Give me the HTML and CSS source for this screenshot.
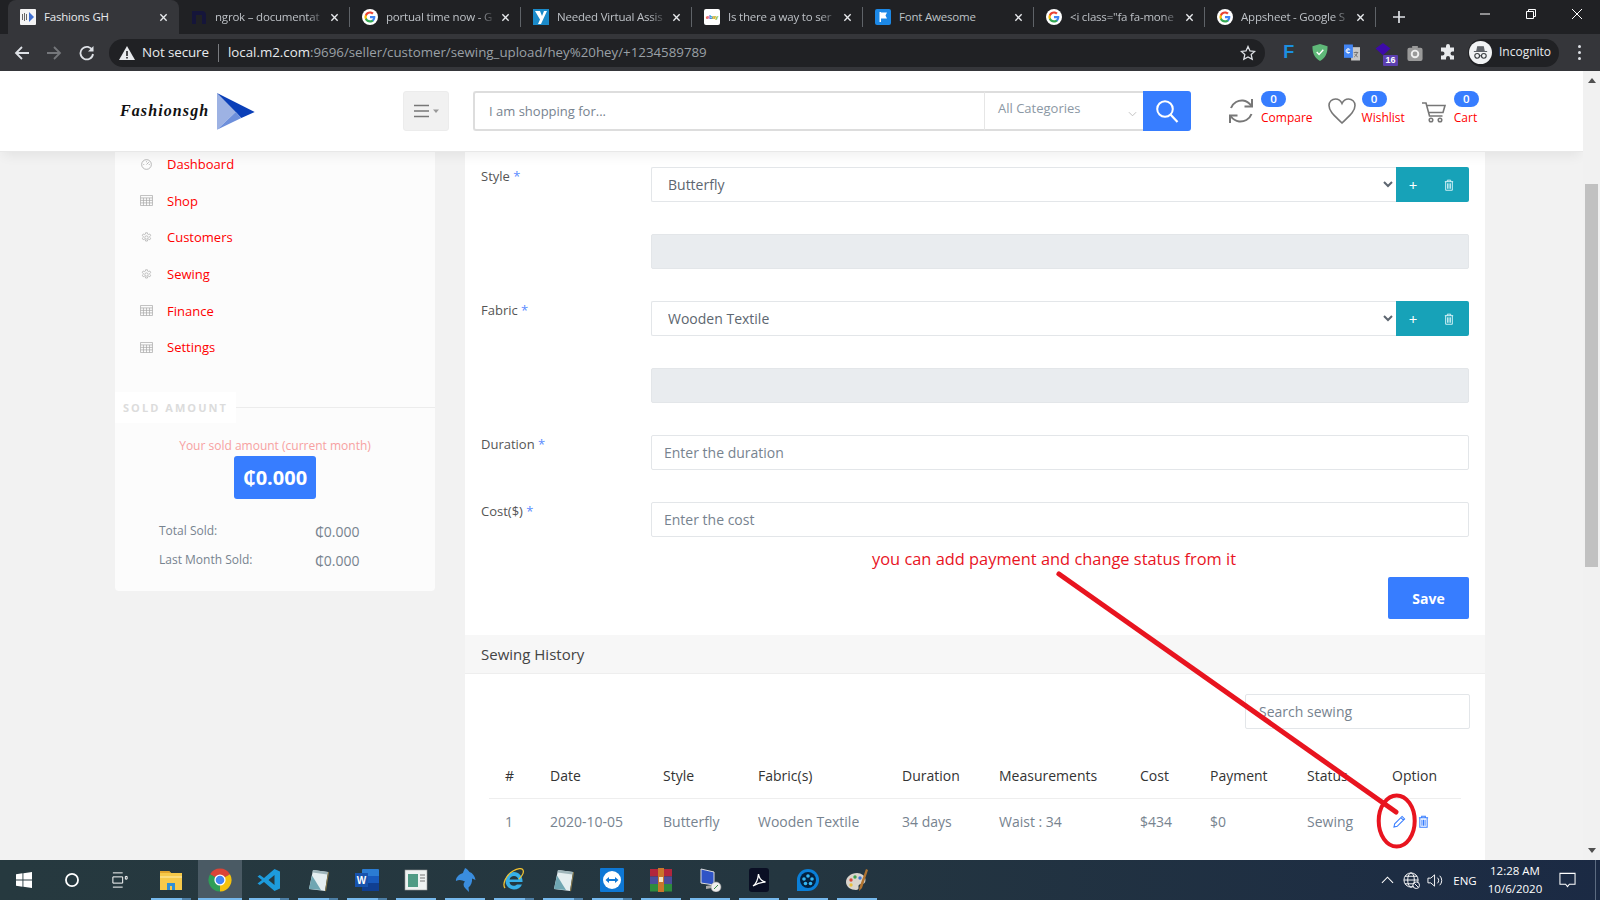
FILE: index.html
```html
<!DOCTYPE html>
<html lang="en">
<head>
<meta charset="utf-8">
<title>Fashions GH</title>
<link rel="stylesheet" href="styles.css">
</head>
<body>
<svg class="defs" aria-hidden="true">
  <symbol id="g" viewBox="0 0 24 24">
    <circle cx="12" cy="12" r="12" fill="#fff"/>
    <g transform="translate(3.2 3.2) scale(.73)">
      <path fill="#4285F4" d="M23 12.3c0-.8-.1-1.600-.2-2.300H12v4.400h6.200c-.3 1.400-1.100 2.600-2.300 3.400v2.900h3.700C21.700 18.700 23 15.800 23 12.300z"/>
      <path fill="#34A853" d="M12 23.500c3.100 0 5.700-1 7.600-2.800l-3.700-2.900c-1 .7-2.300 1.100-3.900 1.100-3 0-5.500-2-6.400-4.700H1.800v3C3.700 21 7.600 23.500 12 23.500z"/>
      <path fill="#FBBC05" d="M5.600 14.200c-.5-1.400-.5-3 0-4.400v-3H1.800a11.500 11.500 0 0 0 0 10.400z"/>
      <path fill="#EA4335" d="M12 5.100c1.700 0 3.200.6 4.400 1.700l3.300-3.300C17.700 1.600 15.100.5 12 .5 7.600.5 3.700 3 1.800 6.800l3.800 3c.9-2.700 3.400-4.700 6.400-4.700z"/>
    </g>
  </symbol>
  <symbol id="x" viewBox="0 0 10 10"><path d="M1.500 1.500l7 7M8.500 1.500l-7 7" fill="none" stroke="currentColor" stroke-width="1.500"/></symbol>
  <symbol id="grid" viewBox="0 0 14 12"><path d="M.5.500h13v11H.5zM.5 3.200h13M.5 5.900h13M.5 8.600h13M3.700 3.200v8.300M7 3.200v8.300M10.300 3.200v8.300" fill="none" stroke="currentColor" stroke-width=".8"/></symbol>
  <symbol id="gear" viewBox="0 0 14 14"><path d="M5.800 1h2.400l.3 1.700 1.200.6 1.500-.8 1.200 1.900-1.300 1.100v1.400l1.300 1.100-1.200 1.900-1.500-.8-1.200.7-.3 1.700H5.800l-.3-1.700-1.200-.7-1.500.8-1.200-1.900 1.300-1.100V5.500L1.600 4.400l1.200-1.900 1.500.8 1.200-.6z" fill="none" stroke="currentColor" stroke-width=".9"/><circle cx="7" cy="7" r="2.100" fill="none" stroke="currentColor" stroke-width=".9"/></symbol>
  <symbol id="trash" viewBox="0 0 12 14"><path d="M1 3h10M4 3V1.200h4V3M2 3v10.300h8V3M4.300 5v6.500M6 5v6.500M7.700 5v6.500" fill="none" stroke="currentColor" stroke-width="1.100"/></symbol>
  <symbol id="notepad" viewBox="0 0 24 24"><path d="M7 2l15 2-3 19-16-2z" fill="#e4eef0"/><path d="M7 2l15 2-.5 2.500L6.500 4.500z" fill="#9fb6bb"/><path d="M3 21L6 7.500l9 14.500z" fill="#6fa6b2"/><path d="M19 23l3-19 1 .3-3 19z" fill="#8a7a4a"/></symbol>
</svg>

<header class="chrome">
  <div class="tabstrip">
    <div class="tab tab-active">
      <svg class="favicon" viewBox="0 0 16 16"><rect width="16" height="16" rx="1" fill="#f4f4f4"/><path d="M2 5h1v6H2zM4 4h1v8H4zM6 5h1v6H6z" fill="#666"/><path d="M9 3l5 5-5 5z" fill="#3f6fd0"/></svg>
      <span class="tab-title">Fashions GH</span>
      <svg class="tab-x"><use href="#x"/></svg>
    </div>
    <div class="tab">
      <svg class="favicon" viewBox="0 0 16 16"><path d="M1 2h10c2.500 0 4 1.500 4 4v9h-4V6H5v9H1z" fill="#15153a"/></svg>
      <span class="tab-title tab-fade">ngrok – documentat</span>
      <svg class="tab-x"><use href="#x"/></svg>
    </div>
    <div class="tab">
      <svg class="favicon"><use href="#g"/></svg>
      <span class="tab-title tab-fade">portual time now - G</span>
      <svg class="tab-x"><use href="#x"/></svg>
    </div>
    <div class="tab">
      <svg class="favicon" viewBox="0 0 16 16"><rect width="16" height="16" fill="#1b8ac9"/><path d="M2 2h5l2 5 2-5h3L8 15H5l2-4.500z" fill="#fff"/></svg>
      <span class="tab-title tab-fade">Needed Virtual Assis</span>
      <svg class="tab-x"><use href="#x"/></svg>
    </div>
    <div class="tab">
      <span class="ebay"><i class="e1">e</i><i class="e2">b</i><i class="e3">a</i><i class="e4">y</i></span>
      <span class="tab-title tab-fade">Is there a way to ser</span>
      <svg class="tab-x"><use href="#x"/></svg>
    </div>
    <div class="tab">
      <svg class="favicon" viewBox="0 0 16 16"><rect width="16" height="16" rx="2" fill="#1c88e6"/><path d="M4.500 3v10h1.500V9.500h6l-1.500-3 1.500-3H6V3z" fill="#fff"/></svg>
      <span class="tab-title">Font Awesome</span>
      <svg class="tab-x"><use href="#x"/></svg>
    </div>
    <div class="tab">
      <svg class="favicon"><use href="#g"/></svg>
      <span class="tab-title tab-fade">&lt;i class="fa fa-mone</span>
      <svg class="tab-x"><use href="#x"/></svg>
    </div>
    <div class="tab">
      <svg class="favicon"><use href="#g"/></svg>
      <span class="tab-title tab-fade">Appsheet - Google S</span>
      <svg class="tab-x"><use href="#x"/></svg>
    </div>
    <svg class="newtab" viewBox="0 0 14 14"><path d="M7 1v12M1 7h12" stroke="#dee1e6" stroke-width="1.700" fill="none"/></svg>
    <div class="winctl">
      <span class="winbtn"><svg viewBox="0 0 12 12"><path d="M1 6h10" stroke="#fff" fill="none"/></svg></span>
      <span class="winbtn"><svg viewBox="0 0 12 12"><path d="M1.500 3.500h7v7h-7zM3.500 3.500v-2h7v7h-2" stroke="#fff" fill="none"/></svg></span>
      <span class="winbtn"><svg viewBox="0 0 12 12"><path d="M1 1l10 10M11 1L1 11" stroke="#fff" fill="none"/></svg></span>
    </div>
  </div>
  <div class="toolbar">
    <span class="navbtn"><svg viewBox="0 0 16 16"><path d="M15 8H2M8 2L2 8l6 6" fill="none" stroke="#dee1e6" stroke-width="1.800"/></svg></span>
    <span class="navbtn"><svg viewBox="0 0 16 16"><path d="M1 8h13M8 2l6 6-6 6" fill="none" stroke="#75777b" stroke-width="1.800"/></svg></span>
    <span class="navbtn"><svg viewBox="0 0 16 16"><path d="M13.500 5.500A6.300 6.300 0 1 0 14 9" fill="none" stroke="#dee1e6" stroke-width="1.800"/><path d="M14.500 1v5.500H9z" fill="#dee1e6"/></svg></span>
    <div class="omnibox">
      <svg class="warn" viewBox="0 0 16 14"><path d="M8 0l8 14H0z" fill="#e8eaed"/><path d="M7.200 5h1.600v5H7.200zM7.200 11h1.600v1.500H7.200z" fill="#202124"/></svg>
      <span class="notsecure">Not secure</span>
      <span class="omni-sep"></span>
      <span class="url"><b>local.m2.com</b>:9696/seller/customer/sewing_upload/hey%20hey/+1234589789</span>
      <svg class="star" viewBox="0 0 16 16"><path d="M8 1.500l2 4.400 4.700.5-3.500 3.200 1 4.700L8 11.900l-4.200 2.400 1-4.700L1.300 6.400 6 5.900z" fill="none" stroke="#dee1e6" stroke-width="1.300"/></svg>
    </div>
    <span class="ext ext-f">F</span>
    <span class="ext"><svg viewBox="0 0 16 18"><path d="M8 0l8 2.500c0 7-2 12.500-8 15.500C2 15 0 9.500 0 2.500z" fill="#5fb878"/><path d="M4.500 8.500l2.500 2.500 4.500-5" fill="none" stroke="#fff" stroke-width="1.500"/></svg></span>
    <span class="ext"><svg viewBox="0 0 18 18"><rect x="8" y="3" width="10" height="15" fill="#c8c8c8"/><rect width="10" height="15" fill="#4285f4"/><path d="M7 6H3.500v3H6.500A2.500 2.500 0 1 1 6 5" fill="none" stroke="#fff" stroke-width="1"/><path d="M11 9h5M13.500 8v1M15 9c-.5 2.500-2 4-3.500 5M12 10.500c.8 1.500 2 2.800 3.500 3.500" fill="none" stroke="#666" stroke-width=".9"/></svg></span>
    <span class="ext ext-badge"><svg viewBox="0 0 16 16"><path d="M8 1l8 6-8 7-8-7z" fill="#3d0aa8"/></svg><span class="ext-count">16</span></span>
    <span class="ext"><svg viewBox="0 0 16 18"><path d="M5 2h6v2h3a2 2 0 0 1 2 2v10a2 2 0 0 1-2 2H2a2 2 0 0 1-2-2V6a2 2 0 0 1 2-2h3z" fill="#9a9a9a"/><circle cx="8" cy="10.500" r="3.500" fill="none" stroke="#eee" stroke-width="2"/></svg></span>
    <span class="ext ext-puzzle"><svg viewBox="0 0 16 16"><path d="M6 1.500a2 2 0 0 1 4 0V3h4v4h-1.500a2 2 0 0 0 0 4H14v4H10v-1.500a2 2 0 0 0-4 0V15H1v-4h1.500a2 2 0 0 0 0-4H1V3h5z" fill="#e8eaed"/></svg></span>
    <div class="incognito">
      <span class="inc-avatar"><svg viewBox="0 0 20 20"><path d="M3 9h14M6 9l1-5h6l1 5" fill="#5f6368" stroke="#5f6368" stroke-width="1.200"/><circle cx="6.500" cy="13.500" r="2.500" fill="none" stroke="#3c4043" stroke-width="1.200"/><circle cx="13.500" cy="13.500" r="2.500" fill="none" stroke="#3c4043" stroke-width="1.200"/><path d="M9 13.500h2" stroke="#3c4043"/></svg></span>
      <span class="inc-label">Incognito</span>
    </div>
    <span class="kebab"><i></i><i></i><i></i></span>
  </div>
</header>

<div class="viewport">
  <div class="page">
    <div class="site-header">
      <a class="logo">
        <span class="logo-text">Fashionsgh</span>
        <svg class="logo-mark" viewBox="0 0 38 37"><path d="M0 0v36.700L18.700 19z" fill="#9db2e3"/><path d="M0 0l37.700 19-13.400 6-5.600-6z" fill="#0a3fb8"/><path d="M0 36.700L18.700 19l5.600 6z" fill="#6d8fdb"/></svg>
      </a>
      <button class="burger">
        <svg viewBox="0 0 26 14"><path d="M1 1.500h15M1 7h15M1 12.500h15" stroke="#777" stroke-width="1.400" fill="none"/><path d="M20 5.500h6l-3 3.500z" fill="#999"/></svg>
      </button>
      <form class="search">
        <input class="search-input" placeholder="I am shopping for...">
        <div class="search-cat"><span>All Categories</span>
          <svg viewBox="0 0 10 6"><path d="M1 1l4 4 4-4" fill="none" stroke="#bbb"/></svg>
        </div>
        <button class="search-btn" type="button"><svg viewBox="0 0 24 24"><circle cx="10" cy="10" r="7.800" fill="none" stroke="#fff" stroke-width="2"/><path d="M15.500 15.500l7 7.500" stroke="#fff" stroke-width="2.200"/></svg></button>
      </form>
      <div class="actions">
        <a class="action">
          <svg class="act-icon" viewBox="0 0 30 30"><path d="M5 12C7 6.500 12.500 4 17 4.500c3.500.4 6 2.200 8.500 5.500M25.500 18C23.500 23.500 18 26 13 25.500c-3.500-.4-6-2.200-8.500-5.500" fill="none" stroke="#777" stroke-width="2"/><path d="M26 3v7.500h-7.500M4 27v-7.500h7.500" fill="none" stroke="#777" stroke-width="2"/></svg>
          <span class="act-col"><b class="badge">0</b><span class="act-label">Compare</span></span>
        </a>
        <a class="action">
          <svg class="act-icon" viewBox="0 0 30 30"><path d="M15 27C9 21 2 16 2 9.500 2 5.500 5 3 8.500 3c3 0 5.200 1.700 6.500 4.500C16.300 4.700 18.500 3 21.500 3 25 3 28 5.500 28 9.500 28 16 21 21 15 27z" fill="none" stroke="#777" stroke-width="1.600"/></svg>
          <span class="act-col"><b class="badge">0</b><span class="act-label">Wishlist</span></span>
        </a>
        <a class="action">
          <svg class="act-icon" viewBox="0 0 30 30"><path d="M3 7h4l3.500 13h13M8 9.500h18l-2 7H9.500" fill="none" stroke="#777" stroke-width="1.600"/><circle cx="12" cy="24" r="1.800" fill="none" stroke="#777" stroke-width="1.500"/><circle cx="21" cy="24" r="1.800" fill="none" stroke="#777" stroke-width="1.500"/></svg>
          <span class="act-col"><b class="badge">0</b><span class="act-label">Cart</span></span>
        </a>
      </div>
    </div>

    <div class="main">
      <aside class="sidebar">
        <ul class="menu">
          <li><svg viewBox="0 0 14 12"><circle cx="7" cy="6" r="5.300" fill="none" stroke="currentColor" stroke-width=".9"/><path d="M7 6l2.500-2.500M3.500 6h1M7 2.500v1M10.500 6h-1" stroke="currentColor" stroke-width=".9"/></svg><a>Dashboard</a></li>
          <li><svg><use href="#grid"/></svg><a>Shop</a></li>
          <li><svg><use href="#gear"/></svg><a>Customers</a></li>
          <li><svg><use href="#gear"/></svg><a>Sewing</a></li>
          <li><svg><use href="#grid"/></svg><a>Finance</a></li>
          <li><svg><use href="#grid"/></svg><a>Settings</a></li>
        </ul>
        <div class="sold-head"><span>SOLD AMOUNT</span><i></i></div>
        <p class="sold-note">Your sold amount (current month)</p>
        <div class="sold-value"><span class="cedi">₵</span>0.000</div>
        <dl class="sold-stats">
          <dt>Total Sold:</dt><dd><span class="cedi">₵</span>0.000</dd>
          <dt>Last Month Sold:</dt><dd><span class="cedi">₵</span>0.000</dd>
        </dl>
      </aside>

      <section class="panel">
        <form class="upload">
          <div class="form-grid">
            <label class="f-label">Style <em>*</em></label>
            <div class="select-group">
              <select><option>Butterfly</option></select>
              <div class="sg-btns"><span class="sg-plus">+</span><svg><use href="#trash"/></svg></div>
            </div>
            <span></span>
            <input class="f-input" disabled>
            <label class="f-label">Fabric <em>*</em></label>
            <div class="select-group">
              <select><option>Wooden Textile</option></select>
              <div class="sg-btns"><span class="sg-plus">+</span><svg><use href="#trash"/></svg></div>
            </div>
            <span></span>
            <input class="f-input" disabled>
            <label class="f-label">Duration <em>*</em></label>
            <input class="f-input" placeholder="Enter the duration">
            <label class="f-label">Cost($) <em>*</em></label>
            <input class="f-input" placeholder="Enter the cost">
          </div>
          <div class="save-row"><button class="save" type="button">Save</button></div>
        </form>
        <h2 class="section-head">Sewing History</h2>
        <div class="history">
          <div class="history-tools"><input class="f-input history-search" placeholder="Search sewing"></div>
          <table class="history-table">
            <colgroup>
              <col class="c1"><col class="c2"><col class="c3"><col class="c4"><col class="c5"><col class="c6"><col class="c7"><col class="c8"><col class="c9"><col class="c10">
            </colgroup>
            <thead>
              <tr><th>#</th><th>Date</th><th>Style</th><th>Fabric(s)</th><th>Duration</th><th>Measurements</th><th>Cost</th><th>Payment</th><th>Status</th><th>Option</th></tr>
            </thead>
            <tbody>
              <tr><td>1</td><td>2020-10-05</td><td>Butterfly</td><td>Wooden Textile</td><td>34 days</td><td>Waist : 34</td><td>$434</td><td>$0</td><td>Sewing</td>
                <td><span class="row-ops">
                  <svg class="op-edit" viewBox="0 0 14 14"><path d="M1 13l.8-3.500L9.800 1.500l2.700 2.700-8 8zM8.500 2.800l2.700 2.700" fill="none" stroke="#377dff" stroke-width="1.100"/></svg>
                  <svg class="op-trash"><use href="#trash"/></svg>
                </span></td></tr>
            </tbody>
          </table>
        </div>
      </section>
    </div>
  </div>
  <div class="scrollbar">
    <span class="sb-arrow sb-up"></span>
    <span class="sb-thumb"></span>
    <span class="sb-arrow sb-down"></span>
  </div>
</div>

<footer class="taskbar">
  <span class="tb-sys"><svg viewBox="0 0 18 18"><path d="M0 2.500L7.300 1.500v7H0zM8.300 1.300L18 0v8.500H8.300zM0 9.500h7.300v7L0 15.500zM8.300 9.500H18V18l-9.700-1.300z" fill="#fff"/></svg></span>
  <span class="tb-sys"><svg viewBox="0 0 18 18"><circle cx="9" cy="9" r="6.800" fill="none" stroke="#fff" stroke-width="2"/></svg></span>
  <span class="tb-sys"><svg viewBox="0 0 18 18"><path d="M1 1h11M1 17h11M1 5.500h11v7H1zM15 5h2v3h-2z" fill="none" stroke="#fff" stroke-width="1.100"/></svg></span>
  <div class="tb-apps">
    <span class="tb-app tb-split"><svg viewBox="0 0 24 24"><path d="M1 3h9l2 2h11v17H1z" fill="#f6c94a"/><path d="M1 3h9l2 2H1z" fill="#e2a52c"/><path d="M1 8h22v2H1z" fill="#fbdc7c"/><path d="M8 22v-7h8v7h-3v-4h-2v4z" fill="#2f8fd6"/></svg></span>
    <span class="tb-app tb-active"><svg viewBox="0 0 24 24"><path d="M12 12L2.040 6.250A11.500 11.500 0 0 1 21.960 6.250z" fill="#db4437"/><path d="M12 12L21.960 6.250A11.500 11.500 0 0 1 12 23.500z" fill="#f4c20d"/><path d="M12 12L12 23.500A11.500 11.500 0 0 1 2.040 6.250z" fill="#2f9e57"/><circle cx="12" cy="12" r="5.600" fill="#fff"/><circle cx="12" cy="12" r="4.300" fill="#4285f4"/></svg></span>
    <span class="tb-app tb-split"><svg viewBox="0 0 24 24"><path fill-rule="evenodd" d="M17.500 1L23 3.500v17L17.500 23 7 14l-4.200 3L.5 15.500 5 12 .5 8.500 2.800 7 7 10zM17.500 7l-6 5 6 5z" fill="#1d9bdc"/></svg></span>
    <span class="tb-app tb-split"><svg><use href="#notepad"/></svg></span>
    <span class="tb-app tb-split"><svg viewBox="0 0 24 24"><rect x="7" y="1" width="17" height="22" rx="1" fill="#2b7cd3"/><path d="M7 8h17v7H7z" fill="#185abd"/><path d="M7 15h17v8H7z" fill="#103f91"/><rect y="5" width="13" height="14" fill="#1853ad"/><text class="word-w" x="6.500" y="16">W</text></svg></span>
    <span class="tb-app"><svg viewBox="0 0 24 24"><rect x="1" y="2" width="22" height="20" fill="#eef2f2" stroke="#999" stroke-width=".6"/><rect x="4" y="6" width="10" height="13" fill="#4f9b85"/><path d="M16 7h5M16 10h5M16 13h5" stroke="#777"/></svg></span>
    <span class="tb-app"><svg viewBox="0 0 24 24"><path d="M12 0c2 1 3.500 2.500 4.500 4 3 1 5.500 4 6 8l-3.500-1.500c.5 3.500-1 7-3.500 9L16 24l-3.500-3.500C10 18 10 15.500 12 13.500 9 12 6 11.500 3 13 2.500 10.500 5 6.500 10 5c.5-2 1.500-3.500 2-5z" fill="#3a8dde"/></svg></span>
    <span class="tb-app tb-split"><svg viewBox="0 0 24 24"><path d="M12 4a8.500 8.500 0 0 0-8.500 9c0 5 4 8.500 8.500 8.500 3.500 0 6.500-1.800 8-5h-5c-1 1-2 1.300-3.300 1.300-2.300 0-4-1.500-4.200-3.800h13c.5-5.500-3.500-10-8.500-10zM7.500 11.500C8 9.500 9.700 8 12 8s3.900 1.500 4.300 3.500z" fill="#37b0e8"/><path d="M3 20C0 16 4 7 11 3c5-3 9-3 10-1s-1 6-4 9" fill="none" stroke="#f2c230" stroke-width="1.300"/></svg></span>
    <span class="tb-app tb-split"><svg><use href="#notepad"/></svg></span>
    <span class="tb-app tb-split"><svg viewBox="0 0 24 24"><rect width="24" height="24" rx="1" fill="#0e78d5"/><circle cx="12" cy="12" r="9" fill="#fff"/><path d="M5.500 12l3.500-3v2h6V9l3.500 3-3.500 3v-2H9v2z" fill="#0e78d5"/></svg></span>
    <span class="tb-app"><svg viewBox="0 0 24 24"><rect x="1" y="1" width="22" height="7.500" fill="#b2263c"/><rect x="1" y="8.500" width="22" height="7.500" fill="#4b4d9a"/><rect x="1" y="16" width="22" height="7.500" fill="#2e8b3e"/><rect x="9" y="0" width="6" height="24" fill="#c9762a"/><rect x="10" y="9" width="4" height="5" fill="#f3e7c4"/></svg></span>
    <span class="tb-app"><svg viewBox="0 0 24 24"><path d="M3 1l13 3v13L3 15z" fill="#2f54c6" stroke="#ddd"/><path d="M8 18l6-1v3l-6 1z" fill="#aaa"/><circle cx="18" cy="19" r="5" fill="#eee" stroke="#999" stroke-width=".6"/><path d="M16 21l4-4" stroke="#3a8a44"/></svg></span>
    <span class="tb-app"><svg viewBox="0 0 24 24"><rect x="2" width="20" height="24" rx="3" fill="#0a0f24"/><path d="M6 18c3-2 5-7 5.500-12 .5 5 3 7 7 8-4 0-8 1-12.500 4z" fill="none" stroke="#fff" stroke-width="1.300"/></svg></span>
    <span class="tb-app"><svg viewBox="0 0 24 24"><path d="M12 1a11 11 0 1 1 0 22H1v-11A11 11 0 0 1 12 1z" fill="#0a7fd8"/><circle cx="12" cy="12" r="8" fill="#04213f"/><g fill="#35b6f2"><circle cx="12" cy="8" r="1.800"/><circle cx="8" cy="11" r="1.800"/><circle cx="16" cy="11" r="1.800"/><circle cx="9.500" cy="15.500" r="1.800"/><circle cx="14.500" cy="15.500" r="1.800"/></g></svg></span>
    <span class="tb-app"><svg viewBox="0 0 24 24"><path d="M12 5C6 5 1 9 1 14c0 5 5 8 10 8 2 0 3-1 2.500-3s1-3 3-3 4-1 4-4c0-4-4-7-8.500-7z" fill="#d9d4cc"/><circle cx="6" cy="12" r="1.700" fill="#d94a3a"/><circle cx="10" cy="9" r="1.700" fill="#3fa04b"/><circle cx="15" cy="10" r="1.700" fill="#3f76d0"/><circle cx="6" cy="17" r="1.700" fill="#e8c13c"/><path d="M21 1l2 1-6 18-3 3 .5-4z" fill="#b0732f"/></svg></span>
  </div>
  <div class="tray">
    <svg class="tray-chev" viewBox="0 0 14 8"><path d="M1 7l6-6 6 6" fill="none" stroke="#fff" stroke-width="1.100"/></svg>
    <svg class="tray-ic tray-globe" viewBox="0 0 18 18"><circle cx="8.500" cy="8.500" r="7.500" fill="none" stroke="#fff"/><ellipse cx="8.500" cy="8.500" rx="3.500" ry="7.500" fill="none" stroke="#fff"/><path d="M1 8.500h15M2 4.500h13M2 12.500h13" stroke="#fff" fill="none"/><circle cx="14" cy="14" r="3.500" fill="#1b2a44" stroke="#fff"/><path d="M12 12l4 4" stroke="#fff"/></svg>
    <svg class="tray-ic tray-vol" viewBox="0 0 18 18"><path d="M1 6.500h3L8 3v12l-4-3.500H1z" fill="none" stroke="#fff"/><path d="M11 6a4 4 0 0 1 0 6M13.500 4a7 7 0 0 1 0 10" fill="none" stroke="#fff"/></svg>
    <span class="tray-lang">ENG</span>
    <span class="tray-clock"><span>12:28 AM</span><span>10/6/2020</span></span>
    <svg class="tray-note" viewBox="0 0 18 16"><path d="M1 1h16v11.500h-6l-2 2.500-2-2.500H1z" fill="none" stroke="#fff" stroke-width="1.100"/></svg>
    <span class="tray-peek"></span>
  </div>
</footer>
<div class="under-strip"></div>

<svg class="annotation" viewBox="0 0 1600 908">
  <text class="anno-text" x="872" y="565">you can add payment and change status from it</text>
  <path d="M1059 574L1396 812" fill="none" stroke="#e8141f" stroke-width="5" stroke-linecap="round"/>
  <ellipse cx="1396.700" cy="821" rx="18" ry="25.500" fill="none" stroke="#e8141f" stroke-width="4"/>
</svg>
</body>
</html>
```
FILE: styles.css
```css
* { box-sizing: border-box; }
html, body { margin: 0; padding: 0; }
body {
  position: relative;
  width: 1600px;
  height: 908px;
  overflow: hidden;
  display: flex;
  flex-direction: column;
  background: #fff;
  font-family: "Open Sans", "DejaVu Sans", sans-serif;
  font-size: 14px;
  color: #77838f;
}
.defs { display: none; }
.cedi { font-family: "Noto Sans", "DejaVu Sans", sans-serif; }

/* browser chrome */
.chrome { flex: none; height: 71px; background: #35363a; color: #e8eaed; }
.tabstrip { height: 34px; background: #202124; display: flex; align-items: stretch; padding-left: 8px; }
.tab {
  flex: none;
  width: 171px;
  display: flex;
  align-items: center;
  padding: 0 5px 0 12px;
  gap: 8px;
  color: #bdc1c6;
  background: linear-gradient(#5f6368, #5f6368) right center / 1px 20px no-repeat;
}
.tab-active { background: #35363a; border-radius: 8px 8px 0 0; color: #e8eaed; }
.favicon { width: 16px; height: 16px; flex: none; }
.ebay {
  width: 16px; height: 16px; flex: none; background: #fff; border-radius: 2px;
  font: bold 6px/16px "Liberation Sans", sans-serif; text-align: center; letter-spacing: -.4px;
}
.ebay i { font-style: normal; }
.e1 { color: #e53238; } .e2 { color: #0064d2; } .e3 { color: #d69e00; } .e4 { color: #86b817; }
.tab-title {
  flex: 1; min-width: 0; white-space: nowrap; margin-top: -2px;
  font-size: 11.500px; letter-spacing: -.2px;
}
.tab-fade {
  -webkit-mask-image: linear-gradient(90deg, #000 84%, transparent 100%);
  mask-image: linear-gradient(90deg, #000 84%, transparent 100%);
}
.tab-x { width: 9px; height: 9px; flex: none; margin-left: -3px; margin-right: 6px; color: #e8eaed; }
.newtab { width: 14px; height: 14px; align-self: center; margin-left: 16px; flex: none; }
.winctl { margin-left: auto; display: flex; }
.winbtn { width: 46px; display: flex; align-items: center; justify-content: center; padding-bottom: 6px; }
.winbtn svg { width: 12px; height: 12px; }

.toolbar { height: 37px; display: flex; align-items: center; padding-left: 6px; }
.navbtn { width: 32px; height: 32px; display: flex; align-items: center; justify-content: center; flex: none; }
.navbtn svg { width: 16px; height: 16px; }
.navbtn:nth-child(3) { margin-left: 1px; margin-right: 6px; }
.omnibox {
  flex: none; width: 1156px; height: 28px; border-radius: 14px; background: #202124;
  display: flex; align-items: center; padding: 0 9px 0 10px;
}
.warn { width: 16px; height: 14px; flex: none; }
.notsecure { margin: -2px 0 0 7px; font-size: 13.400px; color: #e8eaed; white-space: nowrap; letter-spacing: -.1px; }
.omni-sep { width: 1px; height: 18px; background: #7a7c80; margin: 0 9px; flex: none; }
.url { flex: 1; margin-top: -2px; font-size: 13.300px; color: #9aa0a6; white-space: nowrap; }
.url b { font-weight: 400; color: #e8eaed; }
.star { width: 16px; height: 16px; flex: none; }
.ext { width: 31.500px; height: 17px; flex: none; display: flex; align-items: center; justify-content: center; position: relative; }
.ext svg { width: 16px; height: 17px; }
.omnibox + .ext { margin-left: 8px; }
.ext-f { color: #1b8fe0; font: bold 18px/17px "Liberation Sans", sans-serif; }
.ext-badge svg { height: 15px; margin-top: -6px; }
.ext-count {
  position: absolute; left: 15.500px; top: 11px; width: 15px; height: 11px;
  background: #5b3fb0; color: #fff; font: bold 9px/11px "Liberation Sans", sans-serif; text-align: center; border-radius: 1px;
}
.ext-puzzle { margin-left: 1.500px; margin-right: -1.500px; }
.incognito {
  flex: none; width: 91px; height: 28px; margin-left: 6px; border-radius: 14px; background: #202124;
  display: flex; align-items: center; gap: 7px; padding-left: 1px; color: #e8eaed; font-size: 12px;
}
.inc-label { margin-top: -2px; }
.inc-avatar { width: 23px; height: 23px; border-radius: 50%; background: #f1f3f4; display: flex; align-items: center; justify-content: center; }
.inc-avatar svg { width: 19px; height: 19px; }
.kebab { width: 41px; display: flex; flex-direction: column; align-items: center; gap: 3px; }
.kebab i { width: 3px; height: 3px; border-radius: 50%; background: #dee1e6; }

/* viewport */
.viewport { flex: none; height: 789px; display: flex; }
.page { width: 1583px; flex: none; background: #f2f2f2; overflow: hidden; }
.scrollbar { width: 17px; flex: none; background: #f1f1f1; display: flex; flex-direction: column; align-items: center; }
.sb-arrow { width: 0; height: 0; border-left: 4px solid transparent; border-right: 4px solid transparent; }
.sb-up { border-bottom: 5px solid #505050; margin-top: 7px; }
.sb-down { border-top: 5px solid #505050; margin-top: auto; margin-bottom: 7px; }
.sb-thumb { width: 13px; height: 383px; background: #c1c1c1; margin-top: 101px; }

/* site header */
.site-header {
  position: relative; z-index: 2;
  height: 80px; background: #fff; display: flex; align-items: center; padding-left: 120px;
  box-shadow: 0 1px 0 #e8e8e8, 0 7px 12px -3px rgba(0, 0, 0, .07);
}
.logo { flex: none; width: 283px; display: flex; align-items: center; gap: 8px; }
.logo-text { font: italic bold 16px "Liberation Serif", serif; color: #111; letter-spacing: 1.100px; width: 89px; white-space: nowrap; }
.logo-mark { width: 38px; height: 37px; }
.burger {
  flex: none; width: 46px; height: 40px; padding: 0; border: 1px solid #ececec; border-radius: 3px; background: #f1f1f1;
  display: flex; align-items: center; justify-content: center; margin-right: 24px;
}
.burger svg { width: 26px; height: 14px; }
.search { flex: none; width: 718px; height: 40px; display: flex; margin: 0; }
.search-input {
  width: 511px; height: 40px; border: 2px solid #ddd; border-right: 0; border-radius: 3px 0 0 3px;
  padding: 0 14px; font: 13px "Open Sans", sans-serif; outline: 0; color: #77838f;
}
.search-input::placeholder, .f-input::placeholder { color: #77838f; opacity: 1; }
.search-cat {
  width: 159px; height: 40px; border: 2px solid #ddd; border-left: 1px solid #e6e6e6; border-right: 0;
  display: flex; align-items: flex-start; justify-content: space-between; padding: 6px 6px 0 13px;
  font-size: 13px; color: #8c98a4;
}
.search-cat svg { width: 9px; height: 6px; margin-top: 12px; }
.search-btn { width: 48px; height: 40px; padding: 0; border: 0; background: #377dff; border-radius: 0 3px 3px 0; display: flex; align-items: center; justify-content: center; }
.search-btn svg { width: 24px; height: 24px; }
.actions { display: flex; gap: 14px; margin-left: 35px; }
.action { display: flex; align-items: center; gap: 5px; }
.act-icon { width: 30px; height: 30px; flex: none; }
.act-col { display: flex; flex-direction: column; align-items: flex-start; height: 40px; }
.badge {
  width: 25px; height: 16px; border-radius: 8px; background: #377dff; color: #fff;
  font-size: 11.500px; line-height: 16px; font-weight: 600; text-align: center;
}
.act-label { font-size: 12px; line-height: 22px; color: #f00; white-space: nowrap; }

/* layout */
.main { display: flex; align-items: flex-start; padding-left: 115px; gap: 30px; }
.sidebar { width: 320px; flex: none; background: #fcfcfc; border-radius: 0 0 4px 4px; padding-bottom: 16px; }
.menu { list-style: none; margin: -5.350px 0 0; padding: 0; }
.menu li { height: 36.700px; display: flex; align-items: center; padding-left: 25px; }
.menu svg { width: 13px; height: 11px; color: #aaa; flex: none; margin-right: 14px; }
.menu a { font-size: 13px; color: #f00; }
.sold-head { display: flex; align-items: center; height: 31px; margin-top: 26px; }
.sold-head span {
  width: 121px; height: 31px; line-height: 31px; padding-left: 8px; background: #fff;
  font-size: 11px; font-weight: 700; letter-spacing: 2.050px; color: #dcdcdc; white-space: nowrap;
}
.sold-head i { flex: 1; height: 1px; background: #ececec; }
.sold-note { margin: 13px 0 0; text-align: center; font-size: 12px; line-height: 20px; color: #f7a1a1; }
.sold-value {
  width: 82px; height: 43px; margin: 0 auto; border-radius: 3px; background: #377dff; color: #fff;
  font-size: 20px; font-weight: 700; line-height: 43px; text-align: center; white-space: nowrap;
}
.sold-stats { display: grid; grid-template-columns: 156px 1fr; grid-auto-rows: 29px; margin: 18px 0 0; padding-left: 44px; align-items: center; }
.sold-stats dt { font-size: 12px; color: #77838f; margin-top: -2px; }
.sold-stats dd { margin: 0; font-size: 14px; color: #77838f; }

/* panel */
.panel { width: 1020px; flex: none; background: #fff; }
.upload { padding: 16px 16px 16px; }
.form-grid { display: grid; grid-template-columns: 170px 818px; row-gap: 32px; }
.f-label { font-size: 13px; line-height: 19px; color: #555; }
.f-label em { font-style: normal; color: #5b8cff; }
.f-input {
  height: 35px; width: 100%; border: 1px solid #e3e6e9; border-radius: 2px; padding: 0 12px; background: #fff;
  font: 14px "Open Sans", sans-serif; color: #77838f; outline: 0;
}
.f-input:disabled { background: #e9ecef; }
.select-group { display: flex; height: 35px; }
.select-group select {
  flex: 1; min-width: 0; height: 35px; border: 1px solid #e3e6e9; border-right: 0; border-radius: 2px 0 0 2px; background: #fff;
  padding: 0 0 0 12px; font: 14px "Open Sans", sans-serif; color: #5d6670; outline: 0;
}
.sg-btns { flex: none; width: 73px; background: #17a2b8; border-radius: 0 2px 2px 0; display: flex; align-items: center; color: #fff; padding-left: 12px; gap: 26px; }
.sg-plus { font-size: 15px; width: 10px; text-align: center; }
.sg-btns svg { width: 10px; height: 12px; color: #dff6fa; }
.save-row { display: flex; justify-content: flex-end; margin-top: 40px; }
.save { width: 81px; height: 42px; padding: 0; border: 0; border-radius: 2px; background: #377dff; color: #fff; font: 700 14px "Open Sans", sans-serif; }
.section-head {
  margin: 0; height: 39px; padding: 0 16px; background: #f7f7f7; border-bottom: 1px solid #eee;
  font-size: 15px; font-weight: 400; line-height: 39px; color: #444;
}
.history { padding: 20px 15px 40px 24px; }
.history-tools { display: flex; justify-content: flex-end; }
.history-search { width: 225px; padding-left: 13px; }
.history-table { table-layout: fixed; width: 972px; border-collapse: collapse; margin-top: 25px; }
.c1 { width: 41px; } .c2 { width: 113px; } .c3 { width: 95px; } .c4 { width: 144px; } .c5 { width: 97px; }
.c6 { width: 141px; } .c7 { width: 70px; } .c8 { width: 97px; } .c9 { width: 85px; } .c10 { width: 89px; }
.history-table th { height: 44px; padding: 0 0 0 20px; text-align: left; font-size: 14px; font-weight: 400; color: #333; border-bottom: 1px solid #eee; white-space: nowrap; }
.history-table td { height: 48px; padding: 0 0 2px 20px; font-size: 14px; color: #77838f; white-space: nowrap; }
.history-table th:first-child, .history-table td:first-child { padding-left: 16px; }
.row-ops { display: flex; align-items: center; gap: 12px; padding-left: 1px; }
.op-edit { width: 13px; height: 13px; }
.op-trash { width: 11px; height: 13px; color: #377dff; }

/* taskbar */
.taskbar {
  flex: none; height: 40px; display: flex; align-items: stretch;
  background: linear-gradient(90deg, #26393f 0%, #243640 50%, #1b2a44 100%);
}
.tb-sys { width: 48px; display: flex; align-items: center; justify-content: center; }
.tb-sys svg { width: 16px; height: 18px; }
.tb-apps { display: flex; margin-left: 2px; }
.tb-app {
  width: 49px; display: flex;
  background: linear-gradient(#76b9ed, #76b9ed) center bottom / 40px 2px no-repeat;
}
.tb-app svg { width: 24px; height: 24px; margin: auto; }
.tb-split {
  background:
    linear-gradient(#76b9ed, #76b9ed) 4.500px bottom / 31px 2px no-repeat,
    linear-gradient(#4d7fa6, #4d7fa6) center bottom / 40px 2px no-repeat;
}
.tb-active {
  background: linear-gradient(#76b9ed, #76b9ed) center bottom / 44px 2px no-repeat,
    linear-gradient(#4a5a64, #4a5a64) center / 44px 100% no-repeat;
}
.word-w { font: bold 10px "Liberation Sans", sans-serif; fill: #fff; text-anchor: middle; }
.tray { margin-left: auto; display: flex; align-items: center; color: #fff; }
.tray-chev { width: 13px; height: 8px; }
.tray-ic { width: 17px; height: 17px; }
.tray-globe { margin-left: 9px; }
.tray-vol { margin-left: 7px; }
.tray-lang { font-size: 11.500px; margin-left: 6.500px; width: 30px; text-align: center; }
.tray-clock { display: flex; flex-direction: column; align-items: center; font-size: 11.500px; line-height: 18px; width: 60px; margin-left: 5px; }
.tray-note { width: 17px; height: 16px; margin-left: 13.500px; }
.tray-peek { width: 1px; height: 40px; background: #5c6b80; margin-left: 19.500px; margin-right: 4px; }
.under-strip { flex: none; height: 8px; background: #fff; }

/* red annotation drawn over the screenshot */
.annotation { position: absolute; left: 0; top: 0; width: 1600px; height: 908px; pointer-events: none; }
.anno-text { font-family: "Open Sans", sans-serif; font-size: 16.400px; fill: #e8141f; }
```
